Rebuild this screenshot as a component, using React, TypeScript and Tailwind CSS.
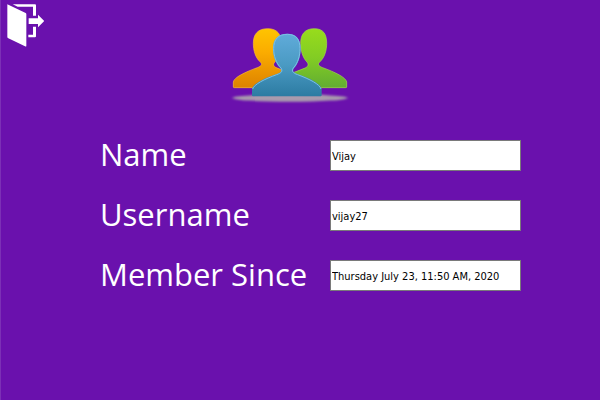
import React from "react";

type Field = { id: string; label: string; value: string };

const fields: Field[] = [
  { id: "name", label: "Name", value: "Vijay" },
  { id: "username", label: "Username", value: "vijay27" },
  { id: "since", label: "Member Since", value: "Thursday July 23, 11:50 AM, 2020" },
];

function ExitIcon() {
  return (
    <svg viewBox="0 0 126 132" className="block h-[44px] w-[42px]" fill="#fff" aria-hidden="true">
      <path d="M16 4 L71 30 Q73 31 73 34 V128 Q73 132 69 130 L19 106 Q16 105 16 102 Z" />
      <path d="M32 4 H99 Q102 4 102 7 V38 H93 V11 H47 Z" />
      <path d="M93 71 H102 V100 Q102 103 99 103 H79 V95 H93 Z" />
      <path d="M80 46 H108 V35 L127 54 L108 73 V63 H80 Z" />
    </svg>
  );
}

function UsersIcon() {
  return (
    <svg viewBox="30 30 360 240" className="block h-20 w-[120px]" aria-hidden="true">
      <defs>
        <linearGradient id="gold" x1="0" y1="0" x2="0" y2="1">
          <stop offset="0" stopColor="#ffc400" />
          <stop offset="0.4" stopColor="#fbac00" />
          <stop offset="1" stopColor="#dd8200" />
        </linearGradient>
        <linearGradient id="green" x1="0" y1="0" x2="0" y2="1">
          <stop offset="0" stopColor="#98dc1c" />
          <stop offset="0.5" stopColor="#82cc24" />
          <stop offset="1" stopColor="#62ad32" />
        </linearGradient>
        <linearGradient id="blue" x1="0" y1="0" x2="0" y2="1">
          <stop offset="0" stopColor="#60abda" />
          <stop offset="0.5" stopColor="#4a9ac3" />
          <stop offset="1" stopColor="#2c7ba2" />
        </linearGradient>
        <filter id="soft" x="-5%" y="-50%" width="110%" height="200%">
          <feGaussianBlur stdDeviation="4 3" />
        </filter>
      </defs>
      <ellipse cx="210" cy="249" rx="172" ry="11" fill="#a99bad" filter="url(#soft)" />
      <path
        d="M40 216 V201 C42 187 76 171 112 158 C125 153 128 148 121 141 C106 128 100 106 100 85 C100 57 114 41 143 41 C172 41 184 58 184 85 C184 106 176 130 163 143 C157 151 164 157 174 160 L200 171 V218 H43 Q40 218 40 216 Z"
        fill="url(#gold)"
        stroke="#ffc12c"
        strokeWidth="2"
      />
      <path
        d="M380 216 V201 C378 187 344 171 308 158 C295 153 292 148 299 141 C314 128 320 106 320 85 C320 57 310 41 283 41 C254 41 242 58 242 85 C242 106 248 128 261 141 C268 150 263 156 253 160 L215 175 V218 H377 Q380 218 380 216 Z"
        fill="url(#green)"
        stroke="#a4e344"
        strokeWidth="2"
      />
      <path
        d="M96 241 V222 C98 207 132 190 168 178 C182 173 187 169 181 160 C166 145 159 122 159 101 C159 72 173 56 202 56 C230 56 242 73 242 101 C242 122 236 145 222 160 C216 168 220 173 234 178 C270 190 303 207 305 222 V241 Q305 244 302 244 H99 Q96 244 96 241 Z"
        fill="url(#blue)"
      />
      <path
        d="M98 222 C102 208 134 192 170 179 C185 174 189 168 183 159 C168 144 161 122 161 101 C161 73 175 58 202 58 C229 58 240 74 240 101 C240 122 234 144 220 159 C214 168 218 174 233 179 C268 192 300 208 303 222"
        fill="none"
        stroke="#7cc0e4"
        strokeWidth="3"
      />
    </svg>
  );
}

export default function App() {
  return (
    <main className="min-h-screen border-l border-[#7c30b6] bg-[#6a11ad]">
      <header className="flex items-start">
        <button type="button" aria-label="Exit" className="mt-[3px] ml-px">
          <ExitIcon />
        </button>
        <div className="flex flex-1 justify-center pt-[25px] pr-[65px]">
          <UsersIcon />
        </div>
      </header>
      <form className="flex flex-col gap-[29px] pt-[35px] pr-[79px] pl-[99px]">
        {fields.map((f) => (
          <div key={f.id} className="flex h-[31px] items-center">
            <label
              htmlFor={f.id}
              className="w-[230px] shrink-0 pb-[2px] font-['Open_Sans','Noto_Sans',sans-serif] text-[31px] leading-[29px] whitespace-nowrap text-white"
            >
              {f.label}
            </label>
            <input
              id={f.id}
              type="text"
              defaultValue={f.value}
              className="h-[31px] min-w-0 flex-1 border border-[#7a7a7a] bg-white px-px pt-[2px] font-['DejaVu_Sans_Condensed','DejaVu_Sans',sans-serif] text-[11px] text-black outline-none"
            />
          </div>
        ))}
      </form>
    </main>
  );
}
